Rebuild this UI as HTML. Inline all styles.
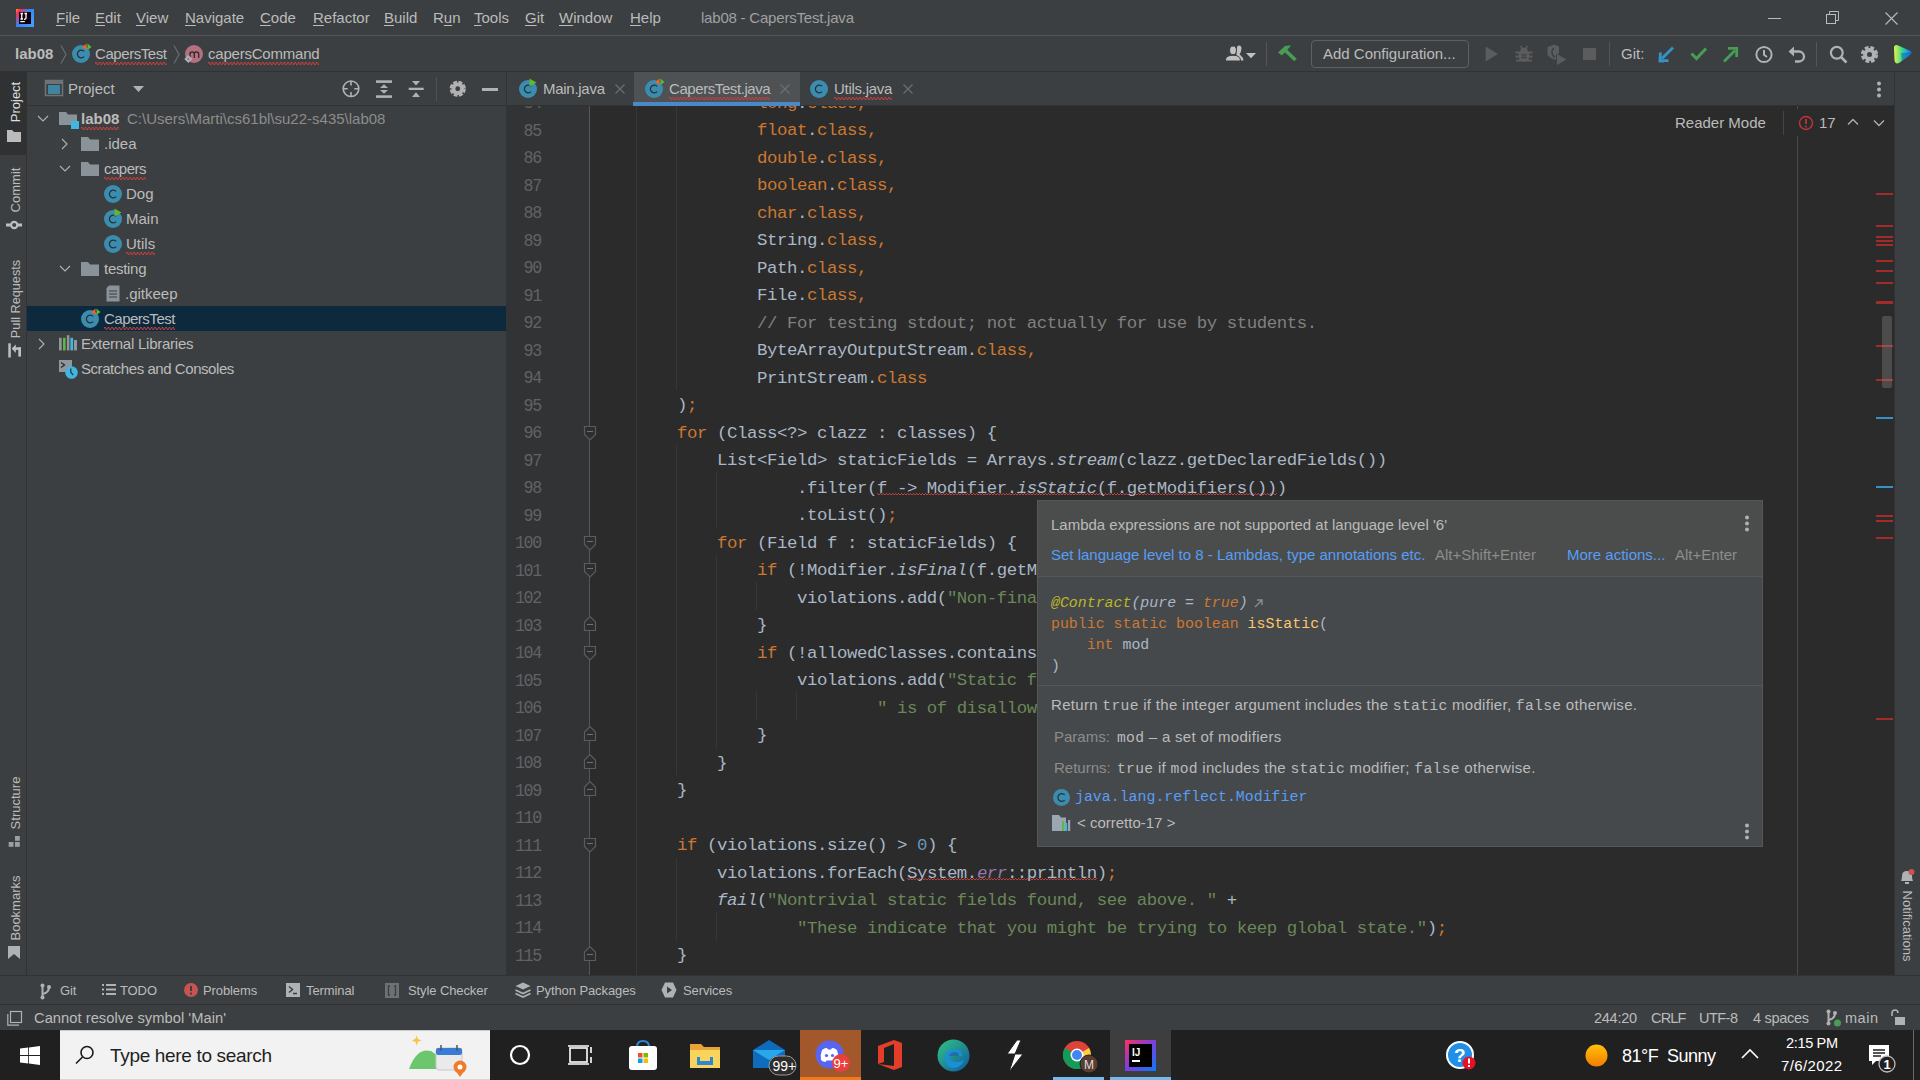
<!DOCTYPE html><html><head><meta charset="utf-8"><style>
*{margin:0;padding:0;box-sizing:border-box}
html,body{width:1920px;height:1080px;overflow:hidden;background:#3c3f41;font-family:"Liberation Sans",sans-serif;color:#bbbbbb}
.a{position:absolute}
.t{position:absolute;white-space:pre;font-size:15px;line-height:20px}
svg{position:absolute;overflow:visible}
#title{left:0;top:0;width:1920px;height:36px;background:#3c3f41;border-bottom:1px solid #515355}
#nav{left:0;top:36px;width:1920px;height:36px;background:#3c3f41;border-bottom:1px solid #323232}
#lstripe{left:0;top:72px;width:27px;height:903px;background:#3c3f41;border-right:1px solid #323232}
#rstripe{left:1894px;top:72px;width:26px;height:903px;background:#3c3f41;border-left:1px solid #323232}
#proj{left:27px;top:72px;width:479px;height:903px;background:#3c3f41}
#projhdr{left:27px;top:72px;width:479px;height:34px;border-bottom:1px solid #323232}
#tabs{left:506px;top:72px;width:1388px;height:34px;background:#3c3f41;border-bottom:1px solid #323232;border-left:1px solid #323232}
#gutter{left:506px;top:106px;width:84px;height:869px;background:#313335}
#editor{left:590px;top:106px;width:1304px;height:869px;background:#2b2b2b;overflow:hidden}
#btool{left:0;top:975px;width:1920px;height:30px;background:#3c3f41;border-top:1px solid #323232;border-bottom:1px solid #323232}
#status{left:0;top:1005px;width:1920px;height:25px;background:#3c3f41}
#taskbar{left:0;top:1030px;width:1920px;height:50px;background:#202020}
.code{position:absolute;left:7px;font-family:"Liberation Mono",monospace;font-size:17.4px;letter-spacing:-0.44px;line-height:27.5px;white-space:pre;color:#a9b7c6}
.k{color:#cc7832}.s{color:#6a8759}.n{color:#6897bb}.cm{color:#808080}.it{font-style:italic}.sf{color:#9876aa;font-style:italic}.an{color:#bbb529}
.ln{position:absolute;right:0;width:36px;text-align:right;font-family:"Liberation Mono",monospace;font-size:16.67px;letter-spacing:-1.35px;transform:scaleY(1.1);transform-origin:0 18px;line-height:27.5px;color:#606366}
.sq{background-image:linear-gradient(90deg,#b8403d 45%,transparent 45%),linear-gradient(90deg,transparent 50%,#b8403d 50%,#b8403d 95%,transparent 95%);background-size:3px 1px,3px 1px;background-repeat:repeat-x;background-position:0 calc(100% - 4px),0 calc(100% - 2.3px);}
.sq2{background-image:linear-gradient(90deg,#c0403c 45%,transparent 45%),linear-gradient(90deg,rgba(192,64,60,.55) 0 100%),linear-gradient(90deg,transparent 50%,#c0403c 50%,#c0403c 95%,transparent 95%);background-size:3.6px 1px,3.6px 1px,3.6px 1px;background-repeat:repeat-x;background-position:0 calc(100% - 2px),0 calc(100% - 1px),0 100%;padding-bottom:3px}
.ug{position:absolute;width:1px;background:#373737}
</style></head><body>
<div class="a" id="title"></div>
<svg style="left:16px;top:9px;" width="18" height="18" viewBox="0 0 18 18"><defs><linearGradient id="ijg" x1="0" y1="0" x2="0.9" y2="0.7"><stop offset="0" stop-color="#ff9a1f"/><stop offset="0.18" stop-color="#fe2857"/><stop offset="0.55" stop-color="#2f86f6"/><stop offset="1" stop-color="#3c9cff"/></linearGradient></defs><rect x="0" y="0" width="18" height="18" fill="url(#ijg)"/><rect x="3" y="3" width="12" height="12" fill="#12010a"/><path d="M4.5 4.5 H7 M5.75 4.5 V10 M4.5 10 H7 M8.5 4.5 H11 M10 4.5 V9 Q10 10.5 8 10.2" stroke="#fff" stroke-width="1.3" fill="none"/><rect x="4.3" y="12" width="4.5" height="1.2" fill="#fff"/></svg>
<div class="t" id="t56_18" style="left:56px;top:8px;font-size:15px;color:#bbbbbb;text-decoration-thickness:1px;text-underline-offset:2px;"><u>F</u>ile</div>
<div class="t" id="t95_18" style="left:95px;top:8px;font-size:15px;color:#bbbbbb;text-decoration-thickness:1px;text-underline-offset:2px;"><u>E</u>dit</div>
<div class="t" id="t136_18" style="left:136px;top:8px;font-size:15px;color:#bbbbbb;text-decoration-thickness:1px;text-underline-offset:2px;"><u>V</u>iew</div>
<div class="t" id="t185_18" style="left:185px;top:8px;font-size:15px;color:#bbbbbb;text-decoration-thickness:1px;text-underline-offset:2px;"><u>N</u>avigate</div>
<div class="t" id="t260_18" style="left:260px;top:8px;font-size:15px;color:#bbbbbb;text-decoration-thickness:1px;text-underline-offset:2px;"><u>C</u>ode</div>
<div class="t" id="t313_18" style="left:313px;top:8px;font-size:15px;color:#bbbbbb;text-decoration-thickness:1px;text-underline-offset:2px;"><u>R</u>efactor</div>
<div class="t" id="t384_18" style="left:384px;top:8px;font-size:15px;color:#bbbbbb;text-decoration-thickness:1px;text-underline-offset:2px;"><u>B</u>uild</div>
<div class="t" id="t433_18" style="left:433px;top:8px;font-size:15px;color:#bbbbbb;text-decoration-thickness:1px;text-underline-offset:2px;">R<u>u</u>n</div>
<div class="t" id="t474_18" style="left:474px;top:8px;font-size:15px;color:#bbbbbb;text-decoration-thickness:1px;text-underline-offset:2px;"><u>T</u>ools</div>
<div class="t" id="t525_18" style="left:525px;top:8px;font-size:15px;color:#bbbbbb;text-decoration-thickness:1px;text-underline-offset:2px;"><u>G</u>it</div>
<div class="t" id="t559_18" style="left:559px;top:8px;font-size:15px;color:#bbbbbb;text-decoration-thickness:1px;text-underline-offset:2px;"><u>W</u>indow</div>
<div class="t" id="t630_18" style="left:630px;top:8px;font-size:15px;color:#bbbbbb;text-decoration-thickness:1px;text-underline-offset:2px;"><u>H</u>elp</div>
<div class="t" id="t701_18" style="left:701px;top:8px;font-size:15px;color:#a0a0a0;letter-spacing:-0.209px;">lab08 - CapersTest.java</div>
<div class="a" style="left:1768px;top:18px;width:13px;height:1px;background:#bbbbbb"></div>
<svg style="left:1826px;top:11px;" width="14" height="14" viewBox="0 0 14 14"><rect x="0.5" y="3.5" width="9" height="9" fill="none" stroke="#bbb"/><path d="M3.5 3.5 V0.5 H12.5 V9.5 H9.5" fill="none" stroke="#bbb"/></svg>
<svg style="left:1885px;top:12px;" width="13" height="13" viewBox="0 0 13 13"><path d="M0.5 0.5 L12.5 12.5 M12.5 0.5 L0.5 12.5" stroke="#bbb" stroke-width="1.1"/></svg>
<div class="a" id="nav"></div>
<div class="t" id="t15_54" style="left:15px;top:44px;font-size:15px;color:#bbbbbb;font-weight:bold;">lab08</div>
<svg style="left:60px;top:45px;" width="8" height="20" viewBox="0 0 8 20"><path d="M1 0.5 L6 9.5 L1 18.5" stroke="#6a6d6f" stroke-width="1.2" fill="none"/></svg>
<svg style="left:72px;top:45px;" width="18" height="18" viewBox="0 0 18 18"><circle cx="9" cy="9" r="9" fill="#3b8db0"/><path d="M12.2 6.4 A3.9 3.9 0 1 0 12.2 11.6" stroke="#2b3033" stroke-width="1.25" fill="none"/><path d="M14.5 -1.5 V5 L10.5 2Z" fill="#f26522"/><path d="M15.5 -1.5 V5 L19.5 2Z" fill="#5fb832"/></svg>
<div class="t" id="t95_54" style="left:95px;top:44px;font-size:15px;color:#bbbbbb;letter-spacing:-0.431px;"><span class="sq2">CapersTest</span></div>
<svg style="left:173px;top:45px;" width="8" height="20" viewBox="0 0 8 20"><path d="M1 0.5 L6 9.5 L1 18.5" stroke="#6a6d6f" stroke-width="1.2" fill="none"/></svg>
<svg style="left:184px;top:44px;" width="20" height="20" viewBox="0 0 20 20"><circle cx="10" cy="10" r="9" fill="#b5707f"/><path d="M6 14 V8.5 M6 10 Q6 7.8 8.2 7.8 Q10.3 7.8 10.3 10 V14 M10.3 10 Q10.3 7.8 12.5 7.8 Q14.7 7.8 14.7 10 V14" stroke="#2b2b2b" stroke-width="1.3" fill="none"/><path d="M4.3 11 L8.3 15 L4.3 19 L0.3 15Z" fill="#a9b5bd"/><circle cx="4.3" cy="15" r="1.3" fill="#b5707f"/></svg>
<div class="t" id="t208_54" style="left:208px;top:44px;font-size:15px;color:#bbbbbb;letter-spacing:-0.218px;"><span class="sq2">capersCommand</span></div>
<svg style="left:1220px;top:42px;" width="30" height="22" viewBox="0 0 30 22"><path d="M17 5.5 Q17 3.5 19.3 3.5 Q21.5 3.5 21.5 6 Q21.5 10 19.5 12 Q21 14 23 16 L23.5 18.5 H16Z" fill="#c0c0c0"/><ellipse cx="13" cy="8.3" rx="3.4" ry="4.3" fill="#c0c0c0" stroke="#3c3f41" stroke-width="1"/><path d="M5.3 19 Q5.3 14.5 10 13.5 Q13 13 16 13.5 Q20.5 14.5 20.5 19Z" fill="#c0c0c0" stroke="#3c3f41" stroke-width="1"/></svg>
<svg style="left:1246px;top:53px;" width="10" height="6" viewBox="0 0 10 6"><path d="M0 0 L10 0 L5 5.3Z" fill="#c0c0c0"/></svg>
<div class="a" style="left:1266px;top:42px;width:1px;height:24px;background:#515658"></div>
<svg style="left:1276px;top:43px;" width="22" height="22" viewBox="0 0 22 22"><path d="M2 9.5 L9 3 L15 2.3 L13 5 L6 12.5Z" fill="#499c54"/><path d="M9.5 7.5 L19.5 17" stroke="#499c54" stroke-width="3.6"/></svg>
<div class="a" style="left:1311px;top:40px;width:158px;height:28px;border:1px solid #5e6060;border-radius:4px"></div>
<div class="t" id="t1323_54" style="left:1323px;top:44px;font-size:15px;color:#bbbbbb;">Add Configuration...</div>
<svg style="left:1484px;top:46px;" width="16" height="16" viewBox="0 0 16 16"><path d="M1.6 0.4 L14 7.9 L1.6 15.4Z" fill="#5a5c5e"/></svg>
<svg style="left:1514px;top:44px;" width="20" height="20" viewBox="0 0 20 20"><ellipse cx="10" cy="11.5" rx="5.6" ry="6.3" fill="#5a5c5e"/><rect x="6.5" y="3.8" width="7" height="4" rx="2" fill="#5a5c5e"/><path d="M6.5 2 L8 4 M13.5 2 L12 4" stroke="#5a5c5e" stroke-width="1.6"/><path d="M1.5 8.5 H18.5 M1.5 12.5 H18.5 M2 16.5 H18" stroke="#5a5c5e" stroke-width="2"/><path d="M7.5 10.8 H12.5 M7.5 13.5 H12.5" stroke="#3c3f41" stroke-width="1.3"/></svg>
<svg style="left:1546px;top:44px;" width="22" height="22" viewBox="0 0 22 22"><path d="M1.5 3 L8.5 0.5 L13 2.5 V9 L10 11 V16 Q5 15 1.5 11Z" fill="#5a5c5e"/><path d="M8 4 Q6 5 6 8 Q6 12 9 13" stroke="#3c3f41" stroke-width="1.4" fill="none"/><path d="M11 10 L20.5 15.5 L11 21Z" fill="#5a5c5e"/></svg>
<div class="a" style="left:1583px;top:48px;width:12.5px;height:12px;background:#5a5c5e"></div>
<div class="a" style="left:1609px;top:42px;width:1px;height:24px;background:#515658"></div>
<div class="t" id="t1621_54" style="left:1621px;top:44px;font-size:15px;color:#bbbbbb;">Git:</div>
<svg style="left:1658px;top:46px;" width="17" height="17" viewBox="0 0 17 17"><path d="M15 1.5 L4 12.5" stroke="#3592c4" stroke-width="2.8"/><path d="M2 11 V15 H6 M2.3 6.5 V14.7 H10.5" stroke="#3592c4" stroke-width="2.8" fill="none"/></svg>
<svg style="left:1690px;top:45px;" width="18" height="17" viewBox="0 0 18 17"><path d="M1.5 8.5 L6.5 13.5 L16 3.5" stroke="#499c54" stroke-width="3" fill="none"/></svg>
<svg style="left:1722px;top:46px;" width="17" height="17" viewBox="0 0 17 17"><path d="M2 15.5 L13 4.5" stroke="#499c54" stroke-width="2.8"/><path d="M6 2.3 H14.7 V11" stroke="#499c54" stroke-width="2.8" fill="none"/></svg>
<svg style="left:1755px;top:45px;" width="18" height="18" viewBox="0 0 18 18"><circle cx="9" cy="9.5" r="7.6" stroke="#afb1b3" stroke-width="2" fill="none"/><path d="M9 5 V9.8 L12 12" stroke="#afb1b3" stroke-width="2" fill="none"/></svg>
<svg style="left:1788px;top:45px;" width="18" height="18" viewBox="0 0 18 18"><path d="M5 6.5 H11 A5 5 0 0 1 11 16.5 H7" stroke="#afb1b3" stroke-width="2.3" fill="none"/><path d="M0.5 6.5 L6 1.5 V11.5Z" fill="#afb1b3"/></svg>
<div class="a" style="left:1816px;top:42px;width:1px;height:24px;background:#515658"></div>
<svg style="left:1829px;top:45px;" width="19" height="19" viewBox="0 0 19 19"><circle cx="7.8" cy="7.8" r="5.9" stroke="#afb1b3" stroke-width="2.2" fill="none"/><path d="M12 12 L17.5 17.5" stroke="#afb1b3" stroke-width="2.6"/></svg>
<svg style="left:1860px;top:45px;" width="19" height="19" viewBox="0 0 19 19"><circle cx="9.5" cy="9.5" r="6.3" fill="none" stroke="#afb1b3" stroke-width="4.6" stroke-dasharray="3.3 1.65"/><circle cx="9.5" cy="9.5" r="6.4" fill="#afb1b3"/><circle cx="9.5" cy="9.5" r="2.5" fill="#3c3f41"/></svg>
<svg style="left:1893px;top:44px;" width="20" height="20" viewBox="0 0 20 20"><defs><linearGradient id="cw" x1="0" y1="0.5" x2="1" y2="0.5"><stop offset="0" stop-color="#e8f24a"/><stop offset="0.45" stop-color="#3ddc84"/><stop offset="0.75" stop-color="#1ea1e6"/><stop offset="1" stop-color="#1466d2"/></linearGradient></defs><path d="M1 4 Q1 0.5 4.5 1.2 L17.5 7 Q19.8 8.5 17.5 10.5 L6 19 Q2 20.5 1.5 16Z" fill="url(#cw)"/><path d="M8 9 L18.5 8.5 L9 17Z" fill="#0d5fc2" opacity="0.55"/></svg>
<div class="a" id="lstripe"></div>
<div class="a" style="left:0;top:72px;width:26px;height:83px;background:#2f3133"></div>
<div class="t" style="left:-34px;top:93px;width:100px;line-height:18px;font-size:13px;color:#dddddd;text-align:center;transform:rotate(-90deg)">Project</div>
<svg style="left:7px;top:130px;" width="14" height="12" viewBox="0 0 14 12"><path d="M0 0 H5 L7 2 H14 V12 H0Z" fill="#bbbbbb"/></svg>
<div class="t" style="left:-34px;top:181px;width:100px;line-height:18px;font-size:13px;color:#bbbbbb;text-align:center;transform:rotate(-90deg)">Commit</div>
<svg style="left:0px;top:215px;" width="28" height="20" viewBox="0 0 28 20"><circle cx="14.2" cy="10" r="3.1" stroke="#bdbfc1" stroke-width="2.2" fill="none"/><path d="M6 10 H10.5 M18 10 H22" stroke="#bdbfc1" stroke-width="3"/></svg>
<div class="t" style="left:-34px;top:290px;width:100px;line-height:18px;font-size:12.7px;color:#bbbbbb;text-align:center;transform:rotate(-90deg)">Pull Requests</div>
<svg style="left:0px;top:335px;" width="28" height="30" viewBox="0 0 28 30"><rect x="8.3" y="8.3" width="2.5" height="14.2" fill="#bdbfc1"/><path d="M11.7 13.6 L15.8 9.4 V18 Z" fill="#bdbfc1"/><rect x="15" y="12.3" width="6" height="2.6" fill="#bdbfc1"/><rect x="18.3" y="12.3" width="2.7" height="9.3" fill="#bdbfc1"/></svg>
<div class="t" style="left:-34px;top:794px;width:100px;line-height:18px;font-size:13px;color:#bbbbbb;text-align:center;transform:rotate(-90deg)">Structure</div>
<svg style="left:8px;top:836px;" width="13" height="12" viewBox="0 0 13 12"><rect x="0.7" y="6" width="4.8" height="4.8" fill="#9c9ea0"/><rect x="7" y="6" width="4.8" height="4.8" fill="#9c9ea0"/><rect x="7" y="0" width="4.8" height="4.8" fill="#9c9ea0"/></svg>
<div class="t" style="left:-34px;top:899px;width:100px;line-height:18px;font-size:13px;color:#bbbbbb;text-align:center;transform:rotate(-90deg)">Bookmarks</div>
<svg style="left:8px;top:946px;" width="12" height="13" viewBox="0 0 12 13"><path d="M0 0 H12 V13 L6 8 L0 13Z" fill="#afb1b3"/></svg>
<div class="a" id="proj"></div>
<div class="a" id="projhdr"></div>
<svg style="left:45px;top:80px;" width="18" height="17" viewBox="0 0 18 17"><rect x="0.5" y="0.5" width="17" height="15" fill="none" stroke="#6f7375" stroke-width="1.5"/><rect x="1" y="1" width="16" height="3" fill="#6f7375"/><rect x="3" y="5" width="12" height="9" fill="#3e86a0"/></svg>
<div class="t" id="t68_89" style="left:68px;top:79px;font-size:15px;color:#bbbbbb;">Project</div>
<svg style="left:133px;top:86px;" width="12" height="7" viewBox="0 0 12 7"><path d="M0 0 H11 L5.5 6Z" fill="#afb1b3"/></svg>
<svg style="left:341px;top:79px;" width="20" height="20" viewBox="0 0 20 20"><circle cx="10" cy="9.75" r="7.8" stroke="#afb1b3" stroke-width="1.6" fill="none"/><path d="M10 2 V6.5 M10 13 V17.5 M2.2 9.75 H6.7 M13.3 9.75 H17.8" stroke="#afb1b3" stroke-width="1.6"/></svg>
<svg style="left:374px;top:79px;" width="20" height="20" viewBox="0 0 20 20"><rect x="2" y="1.3" width="16" height="2.6" fill="#afb1b3"/><rect x="2" y="16.3" width="16" height="2.6" fill="#afb1b3"/><path d="M6 9 L10 5.2 L14 9Z M6 11 L10 14.8 L14 11Z" fill="#afb1b3"/></svg>
<svg style="left:407px;top:79px;" width="20" height="20" viewBox="0 0 20 20"><rect x="1.7" y="8.7" width="15" height="2.3" fill="#afb1b3"/><path d="M5 2 L13 2 L9 6.6Z M5 18 L13 18 L9 13.2Z" fill="#afb1b3"/></svg>
<div class="a" style="left:436px;top:77px;width:1px;height:24px;background:#4f5254"></div>
<svg style="left:448px;top:79px;" width="20" height="20" viewBox="0 0 20 20"><circle cx="9.75" cy="9.75" r="6" fill="none" stroke="#afb1b3" stroke-width="4.2" stroke-dasharray="3.4 1.3"/><circle cx="9.75" cy="9.75" r="6.2" fill="#afb1b3"/><circle cx="9.75" cy="9.75" r="2.4" fill="#3c3f41"/></svg>
<div class="a" style="left:482px;top:88px;width:16px;height:2.5px;background:#afb1b3"></div>
<svg style="left:37px;top:115px;" width="12" height="8" viewBox="0 0 12 8"><path d="M1 1 L6 6 L11 1" stroke="#afb1b3" stroke-width="1.1" fill="none"/></svg>
<svg style="left:59px;top:112px;" width="18" height="13" viewBox="0 0 18 13"><path d="M0 0 H7 L9 2.5 H18 V13 H0Z" fill="#8a9399"/></svg>
<div class="a" style="left:71px;top:121px;width:8px;height:8px;background:#40b6e0"></div>
<div class="t" id="t81_119" style="left:81px;top:109px;font-size:15px;color:#bbbbbb;font-weight:bold;"><span class="sq2">lab08</span></div>
<div class="t" id="t127_119" style="left:127px;top:109px;font-size:15px;color:#8c8c8c;">C:\Users\Marti\cs61bl\su22-s435\lab08</div>
<svg style="left:61px;top:138px;" width="8" height="12" viewBox="0 0 8 12"><path d="M1 1 L6 6 L1 11" stroke="#afb1b3" stroke-width="1.1" fill="none"/></svg>
<svg style="left:81px;top:137px;" width="18" height="14" viewBox="0 0 18 14"><path d="M0 0 H7 L9 2.5 H18 V14 H0Z" fill="#8a9399"/></svg>
<div class="t" id="t104_144" style="left:104px;top:134px;font-size:15px;">.idea</div>
<svg style="left:59px;top:165px;" width="12" height="8" viewBox="0 0 12 8"><path d="M1 1 L6 6 L11 1" stroke="#afb1b3" stroke-width="1.1" fill="none"/></svg>
<svg style="left:81px;top:162px;" width="18" height="14" viewBox="0 0 18 14"><path d="M0 0 H7 L9 2.5 H18 V14 H0Z" fill="#8a9399"/></svg>
<div class="t" id="t104_169" style="left:104px;top:159px;font-size:15px;letter-spacing:-0.506px;"><span class="sq2">capers</span></div>
<svg style="left:104px;top:185px;" width="18" height="18" viewBox="0 0 18 18"><circle cx="9" cy="9" r="9" fill="#3b8db0"/><path d="M12.2 6.4 A3.9 3.9 0 1 0 12.2 11.6" stroke="#2b3033" stroke-width="1.25" fill="none"/></svg>
<div class="t" id="t126_194" style="left:126px;top:184px;font-size:15px;">Dog</div>
<svg style="left:104px;top:210px;" width="18" height="18" viewBox="0 0 18 18"><circle cx="9" cy="9" r="9" fill="#3b8db0"/><path d="M12.2 6.4 A3.9 3.9 0 1 0 12.2 11.6" stroke="#2b3033" stroke-width="1.25" fill="none"/><path d="M10.5 -1.5 L17.5 2.5 L10.5 6.5 Z" fill="#5fb832"/></svg>
<div class="t" id="t126_219" style="left:126px;top:209px;font-size:15px;">Main</div>
<svg style="left:104px;top:235px;" width="18" height="18" viewBox="0 0 18 18"><circle cx="9" cy="9" r="9" fill="#3b8db0"/><path d="M12.2 6.4 A3.9 3.9 0 1 0 12.2 11.6" stroke="#2b3033" stroke-width="1.25" fill="none"/></svg>
<div class="t" id="t126_244" style="left:126px;top:234px;font-size:15px;"><span class="sq2">Utils</span></div>
<svg style="left:59px;top:265px;" width="12" height="8" viewBox="0 0 12 8"><path d="M1 1 L6 6 L11 1" stroke="#afb1b3" stroke-width="1.1" fill="none"/></svg>
<svg style="left:81px;top:262px;" width="18" height="14" viewBox="0 0 18 14"><path d="M0 0 H7 L9 2.5 H18 V14 H0Z" fill="#8a9399"/></svg>
<div class="t" id="t104_269" style="left:104px;top:259px;font-size:15px;letter-spacing:-0.284px;">testing</div>
<svg style="left:106px;top:285px;" width="14" height="17" viewBox="0 0 14 17"><path d="M3 0.5 H13.5 V16.5 H0.5 V3Z" fill="#8a9399"/><path d="M3 6 H11 M3 9 H11 M3 12 H11" stroke="#3c3f41" stroke-width="1.2"/></svg>
<div class="t" id="t125_294" style="left:125px;top:284px;font-size:15px;">.gitkeep</div>
<div class="a" style="left:27px;top:306px;width:479px;height:25px;background:#0d293e"></div>
<svg style="left:81px;top:310px;" width="18" height="18" viewBox="0 0 18 18"><circle cx="9" cy="9" r="9" fill="#3b8db0"/><path d="M12.2 6.4 A3.9 3.9 0 1 0 12.2 11.6" stroke="#2b3033" stroke-width="1.25" fill="none"/><path d="M14.5 -1.5 V5 L10.5 2Z" fill="#f26522"/><path d="M15.5 -1.5 V5 L19.5 2Z" fill="#5fb832"/></svg>
<div class="t" id="t104_319" style="left:104px;top:309px;font-size:15px;letter-spacing:-0.497px;"><span class="sq2">CapersTest</span></div>
<svg style="left:38px;top:338px;" width="8" height="12" viewBox="0 0 8 12"><path d="M1 1 L6 6 L1 11" stroke="#afb1b3" stroke-width="1.1" fill="none"/></svg>
<svg style="left:58px;top:334px;" width="20" height="18" viewBox="0 0 20 18"><rect x="1" y="3.8" width="2.7" height="12.6" fill="#8e979d"/><rect x="5" y="3.8" width="2.6" height="12.6" fill="#62b543"/><rect x="8.9" y="1.2" width="2.5" height="15.2" fill="#8e979d"/><rect x="12.4" y="3.8" width="2.7" height="12.6" fill="#40b6e0"/><rect x="16" y="6" width="3" height="10.4" fill="#8e979d"/></svg>
<div class="t" id="t81_344" style="left:81px;top:334px;font-size:15px;letter-spacing:-0.248px;">External Libraries</div>
<svg style="left:58px;top:359px;" width="24" height="22" viewBox="0 0 24 22"><path d="M1 1 H14 V8 Q10 9 9 13 H1Z" fill="#8e979d"/><path d="M3 3.5 L6.5 6 L3 8.5" stroke="#2b2d2f" stroke-width="1.3" fill="none"/><circle cx="13.5" cy="13.5" r="6.3" fill="#40b6e0"/><path d="M12.8 9.5 V13.3 L15.2 16" stroke="#2b3033" stroke-width="1.2" fill="none"/></svg>
<div class="t" id="t81_369" style="left:81px;top:359px;font-size:15px;letter-spacing:-0.443px;">Scratches and Consoles</div>
<div class="a" id="gutter"></div>
<div class="a" id="editor">
<div class="ug" style="left:46px;top:-1px;height:870px"></div>
<div class="ug" style="left:86px;top:-1px;height:285px"></div>
<div class="ug" style="left:86px;top:339px;height:330px"></div>
<div class="ug" style="left:86px;top:752px;height:82px"></div>
<div class="ug" style="left:126px;top:366px;height:55px"></div>
<div class="ug" style="left:126px;top:449px;height:193px"></div>
<div class="ug" style="left:126px;top:806px;height:28px"></div>
<div class="ug" style="left:166px;top:476px;height:28px"></div>
<div class="ug" style="left:166px;top:586px;height:28px"></div>
<div class="ug" style="left:206px;top:586px;height:28px"></div>
<div class="ug" style="left:1207px;top:0;height:3px;background:#4a4a4a"></div><div class="ug" style="left:1207px;top:30px;height:840px;background:#4a4a4a"></div>
<div class="code" style="top:-16.30px">                <span class="k">long</span>.<span class="k">class</span><span class="k">,</span></div><div class="code" style="top:11.20px">                <span class="k">float</span>.<span class="k">class</span><span class="k">,</span></div><div class="code" style="top:38.70px">                <span class="k">double</span>.<span class="k">class</span><span class="k">,</span></div><div class="code" style="top:66.20px">                <span class="k">boolean</span>.<span class="k">class</span><span class="k">,</span></div><div class="code" style="top:93.70px">                <span class="k">char</span>.<span class="k">class</span><span class="k">,</span></div><div class="code" style="top:121.20px">                String.<span class="k">class</span><span class="k">,</span></div><div class="code" style="top:148.70px">                Path.<span class="k">class</span><span class="k">,</span></div><div class="code" style="top:176.20px">                File.<span class="k">class</span><span class="k">,</span></div><div class="code" style="top:203.70px">                <span class="cm">// For testing stdout; not actually for use by students.</span></div><div class="code" style="top:231.20px">                ByteArrayOutputStream.<span class="k">class</span><span class="k">,</span></div><div class="code" style="top:258.70px">                PrintStream.<span class="k">class</span></div><div class="code" style="top:286.20px">        )<span class="k">;</span></div><div class="code" style="top:313.70px">        <span class="k">for</span> (Class&lt;?&gt; clazz : classes) {</div><div class="code" style="top:341.20px">            List&lt;Field&gt; staticFields = Arrays.<span class="it">stream</span>(clazz.getDeclaredFields())</div><div class="code" style="top:368.70px">                    .filter(<span class="sq">f -&gt; Modifier.<span class="it">isStatic</span>(f.getModifiers())</span>)</div><div class="code" style="top:396.20px">                    .toList()<span class="k">;</span></div><div class="code" style="top:423.70px">            <span class="k">for</span> (Field f : staticFields) {</div><div class="code" style="top:451.20px">                <span class="k">if</span> (!Modifier.<span class="it">isFinal</span>(f.getModifiers())) {</div><div class="code" style="top:478.70px">                    violations.add(<span class="s">&quot;Non-final static field &quot; </span>+</div><div class="code" style="top:506.20px">                }</div><div class="code" style="top:533.70px">                <span class="k">if</span> (!allowedClasses.contains(f.getType())) {</div><div class="code" style="top:561.20px">                    violations.add(<span class="s">&quot;Static field &quot;</span> + f.getName() +</div><div class="code" style="top:588.70px">                            <span class="s">&quot; is of disallowed type&quot;</span>)<span class="k">;</span></div><div class="code" style="top:616.20px">                }</div><div class="code" style="top:643.70px">            }</div><div class="code" style="top:671.20px">        }</div><div class="code" style="top:698.70px"></div><div class="code" style="top:726.20px">        <span class="k">if</span> (violations.size() &gt; <span class="n">0</span>) {</div><div class="code" style="top:753.70px">            violations.forEach(<span class="sq">System.<span class="sf">err</span>::println</span>)<span class="k">;</span></div><div class="code" style="top:781.20px">            <span class="it">fail</span>(<span class="s">&quot;Nontrivial static fields found, see above. &quot;</span> +</div><div class="code" style="top:808.70px">                    <span class="s">&quot;These indicate that you might be trying to keep global state.&quot;</span>)<span class="k">;</span></div><div class="code" style="top:836.20px">        }</div><div class="code" style="top:863.70px"></div>
</div>
<div class="a" style="left:506px;top:106px;width:84px;height:869px;overflow:hidden">
<div class="ln" style="left:0;width:34.9px;top:-15.90px">84</div>
<div class="ln" style="left:0;width:34.9px;top:11.60px">85</div>
<div class="ln" style="left:0;width:34.9px;top:39.10px">86</div>
<div class="ln" style="left:0;width:34.9px;top:66.60px">87</div>
<div class="ln" style="left:0;width:34.9px;top:94.10px">88</div>
<div class="ln" style="left:0;width:34.9px;top:121.60px">89</div>
<div class="ln" style="left:0;width:34.9px;top:149.10px">90</div>
<div class="ln" style="left:0;width:34.9px;top:176.60px">91</div>
<div class="ln" style="left:0;width:34.9px;top:204.10px">92</div>
<div class="ln" style="left:0;width:34.9px;top:231.60px">93</div>
<div class="ln" style="left:0;width:34.9px;top:259.10px">94</div>
<div class="ln" style="left:0;width:34.9px;top:286.60px">95</div>
<div class="ln" style="left:0;width:34.9px;top:314.10px">96</div>
<div class="ln" style="left:0;width:34.9px;top:341.60px">97</div>
<div class="ln" style="left:0;width:34.9px;top:369.10px">98</div>
<div class="ln" style="left:0;width:34.9px;top:396.60px">99</div>
<div class="ln" style="left:0;width:34.9px;top:424.10px">100</div>
<div class="ln" style="left:0;width:34.9px;top:451.60px">101</div>
<div class="ln" style="left:0;width:34.9px;top:479.10px">102</div>
<div class="ln" style="left:0;width:34.9px;top:506.60px">103</div>
<div class="ln" style="left:0;width:34.9px;top:534.10px">104</div>
<div class="ln" style="left:0;width:34.9px;top:561.60px">105</div>
<div class="ln" style="left:0;width:34.9px;top:589.10px">106</div>
<div class="ln" style="left:0;width:34.9px;top:616.60px">107</div>
<div class="ln" style="left:0;width:34.9px;top:644.10px">108</div>
<div class="ln" style="left:0;width:34.9px;top:671.60px">109</div>
<div class="ln" style="left:0;width:34.9px;top:699.10px">110</div>
<div class="ln" style="left:0;width:34.9px;top:726.60px">111</div>
<div class="ln" style="left:0;width:34.9px;top:754.10px">112</div>
<div class="ln" style="left:0;width:34.9px;top:781.60px">113</div>
<div class="ln" style="left:0;width:34.9px;top:809.10px">114</div>
<div class="ln" style="left:0;width:34.9px;top:836.60px">115</div>
<div class="ln" style="left:0;width:34.9px;top:864.10px">116</div>
</div>
<div class="a" id="tabs"></div>
<div class="a" style="left:634px;top:72px;width:166px;height:33px;background:#4e5254"></div>
<div class="a" style="left:633px;top:102px;width:167px;height:4px;background:#4a88c7"></div>
<svg style="left:519px;top:80px;" width="18" height="18" viewBox="0 0 18 18"><circle cx="9" cy="9" r="9" fill="#3b8db0"/><path d="M12.2 6.4 A3.9 3.9 0 1 0 12.2 11.6" stroke="#2b3033" stroke-width="1.25" fill="none"/><path d="M10.5 -1.5 L17.5 2.5 L10.5 6.5 Z" fill="#5fb832"/></svg>
<div class="t" id="t543_89" style="left:543px;top:79px;font-size:15px;letter-spacing:-0.275px;">Main.java</div>
<svg style="left:615px;top:84px;" width="10" height="10" viewBox="0 0 10 10"><path d="M0.5 0.5 L9.5 9.5 M9.5 0.5 L0.5 9.5" stroke="#6e7072" stroke-width="1.1"/></svg>
<svg style="left:645px;top:80px;" width="18" height="18" viewBox="0 0 18 18"><circle cx="9" cy="9" r="9" fill="#3b8db0"/><path d="M12.2 6.4 A3.9 3.9 0 1 0 12.2 11.6" stroke="#2b3033" stroke-width="1.25" fill="none"/><path d="M14.5 -1.5 V5 L10.5 2Z" fill="#f26522"/><path d="M15.5 -1.5 V5 L19.5 2Z" fill="#5fb832"/></svg>
<div class="t" id="t669_89" style="left:669px;top:79px;font-size:15px;letter-spacing:-0.419px;"><span class="sq2">CapersTest.java</span></div>
<svg style="left:780px;top:84px;" width="10" height="10" viewBox="0 0 10 10"><path d="M0.5 0.5 L9.5 9.5 M9.5 0.5 L0.5 9.5" stroke="#6e7072" stroke-width="1.1"/></svg>
<svg style="left:810px;top:80px;" width="18" height="18" viewBox="0 0 18 18"><circle cx="9" cy="9" r="9" fill="#3b8db0"/><path d="M12.2 6.4 A3.9 3.9 0 1 0 12.2 11.6" stroke="#2b3033" stroke-width="1.25" fill="none"/></svg>
<div class="t" id="t834_89" style="left:834px;top:79px;font-size:15px;letter-spacing:-0.284px;"><span class="sq2">Utils.java</span></div>
<svg style="left:903px;top:84px;" width="10" height="10" viewBox="0 0 10 10"><path d="M0.5 0.5 L9.5 9.5 M9.5 0.5 L0.5 9.5" stroke="#6e7072" stroke-width="1.1"/></svg>
<svg style="left:1876px;top:81px;" width="6" height="17" viewBox="0 0 6 17"><circle cx="3" cy="2.5" r="2" fill="#afb1b3"/><circle cx="3" cy="8.5" r="2" fill="#afb1b3"/><circle cx="3" cy="14.5" r="2" fill="#afb1b3"/></svg>
<div class="a" style="left:589px;top:106px;width:1px;height:869px;background:#555759"></div>
<svg style="left:584px;top:425.5px;" width="13" height="15" viewBox="0 0 13 15"><path d="M0.5 0.5 H11.5 V8.5 L6 14 L0.5 8.5Z" fill="#2d2e2f" stroke="#5a5c5e" stroke-width="1.2"/><path d="M3 5.5 H9" stroke="#6e7072" stroke-width="1"/></svg>
<svg style="left:584px;top:535.5px;" width="13" height="15" viewBox="0 0 13 15"><path d="M0.5 0.5 H11.5 V8.5 L6 14 L0.5 8.5Z" fill="#2d2e2f" stroke="#5a5c5e" stroke-width="1.2"/><path d="M3 5.5 H9" stroke="#6e7072" stroke-width="1"/></svg>
<svg style="left:584px;top:563.0px;" width="13" height="15" viewBox="0 0 13 15"><path d="M0.5 0.5 H11.5 V8.5 L6 14 L0.5 8.5Z" fill="#2d2e2f" stroke="#5a5c5e" stroke-width="1.2"/><path d="M3 5.5 H9" stroke="#6e7072" stroke-width="1"/></svg>
<svg style="left:584px;top:645.5px;" width="13" height="15" viewBox="0 0 13 15"><path d="M0.5 0.5 H11.5 V8.5 L6 14 L0.5 8.5Z" fill="#2d2e2f" stroke="#5a5c5e" stroke-width="1.2"/><path d="M3 5.5 H9" stroke="#6e7072" stroke-width="1"/></svg>
<svg style="left:584px;top:838.0px;" width="13" height="15" viewBox="0 0 13 15"><path d="M0.5 0.5 H11.5 V8.5 L6 14 L0.5 8.5Z" fill="#2d2e2f" stroke="#5a5c5e" stroke-width="1.2"/><path d="M3 5.5 H9" stroke="#6e7072" stroke-width="1"/></svg>
<svg style="left:584px;top:616.0px;" width="13" height="15" viewBox="0 0 13 15"><path d="M0.5 14.5 H11.5 V6 L6 0.5 L0.5 6Z" fill="#2d2e2f" stroke="#5a5c5e" stroke-width="1.2"/><path d="M3 8.5 H9" stroke="#6e7072" stroke-width="1"/></svg>
<svg style="left:584px;top:726.0px;" width="13" height="15" viewBox="0 0 13 15"><path d="M0.5 14.5 H11.5 V6 L6 0.5 L0.5 6Z" fill="#2d2e2f" stroke="#5a5c5e" stroke-width="1.2"/><path d="M3 8.5 H9" stroke="#6e7072" stroke-width="1"/></svg>
<svg style="left:584px;top:753.5px;" width="13" height="15" viewBox="0 0 13 15"><path d="M0.5 14.5 H11.5 V6 L6 0.5 L0.5 6Z" fill="#2d2e2f" stroke="#5a5c5e" stroke-width="1.2"/><path d="M3 8.5 H9" stroke="#6e7072" stroke-width="1"/></svg>
<svg style="left:584px;top:781.0px;" width="13" height="15" viewBox="0 0 13 15"><path d="M0.5 14.5 H11.5 V6 L6 0.5 L0.5 6Z" fill="#2d2e2f" stroke="#5a5c5e" stroke-width="1.2"/><path d="M3 8.5 H9" stroke="#6e7072" stroke-width="1"/></svg>
<svg style="left:584px;top:946.0px;" width="13" height="15" viewBox="0 0 13 15"><path d="M0.5 14.5 H11.5 V6 L6 0.5 L0.5 6Z" fill="#2d2e2f" stroke="#5a5c5e" stroke-width="1.2"/><path d="M3 8.5 H9" stroke="#6e7072" stroke-width="1"/></svg>
<div class="t" id="t1675_123" style="left:1675px;top:113px;font-size:15px;color:#bbbbbb;">Reader Mode</div>
<div class="a" style="left:1783px;top:111px;width:1px;height:24px;background:#424446"></div>
<svg style="left:1798px;top:115px;" width="16" height="16" viewBox="0 0 16 16"><circle cx="8" cy="8" r="6.5" stroke="#c03538" stroke-width="1.4" fill="none"/><path d="M8 4 V9" stroke="#c03538" stroke-width="1.8"/><circle cx="8" cy="11.5" r="1" fill="#c03538"/></svg>
<div class="t" id="t1819_123" style="left:1819px;top:113px;font-size:15px;color:#bbbbbb;">17</div>
<svg style="left:1847px;top:118px;" width="12" height="8" viewBox="0 0 12 8"><path d="M1 6.5 L6 1.5 L11 6.5" stroke="#afb1b3" stroke-width="1.3" fill="none"/></svg>
<svg style="left:1873px;top:119px;" width="12" height="8" viewBox="0 0 12 8"><path d="M1 1.5 L6 6.5 L11 1.5" stroke="#afb1b3" stroke-width="1.3" fill="none"/></svg>
<div class="a" style="left:1876px;top:193px;width:17px;height:2px;background:#a32b2b"></div>
<div class="a" style="left:1876px;top:225px;width:17px;height:2px;background:#a32b2b"></div>
<div class="a" style="left:1876px;top:236px;width:17px;height:2px;background:#a32b2b"></div>
<div class="a" style="left:1876px;top:240px;width:17px;height:2px;background:#a32b2b"></div>
<div class="a" style="left:1876px;top:244px;width:17px;height:2px;background:#a32b2b"></div>
<div class="a" style="left:1876px;top:260px;width:17px;height:2px;background:#a32b2b"></div>
<div class="a" style="left:1876px;top:270px;width:17px;height:2px;background:#a32b2b"></div>
<div class="a" style="left:1876px;top:281.5px;width:17px;height:2px;background:#a32b2b"></div>
<div class="a" style="left:1876px;top:301px;width:17px;height:2px;background:#a32b2b"></div>
<div class="a" style="left:1876px;top:302px;width:17px;height:2px;background:#a32b2b"></div>
<div class="a" style="left:1876px;top:345px;width:17px;height:2px;background:#a32b2b"></div>
<div class="a" style="left:1876px;top:379px;width:17px;height:2px;background:#a32b2b"></div>
<div class="a" style="left:1876px;top:515px;width:17px;height:2px;background:#a32b2b"></div>
<div class="a" style="left:1876px;top:520px;width:17px;height:2px;background:#a32b2b"></div>
<div class="a" style="left:1876px;top:537px;width:17px;height:2px;background:#a32b2b"></div>
<div class="a" style="left:1876px;top:718px;width:17px;height:2px;background:#a32b2b"></div>
<div class="a" style="left:1876px;top:417px;width:17px;height:2px;background:#3592c4"></div>
<div class="a" style="left:1876px;top:486px;width:17px;height:2px;background:#3592c4"></div>
<div class="a" style="left:1882px;top:316px;width:10px;height:72px;background:rgba(160,160,160,0.28);border-radius:2px"></div>
<div class="a" id="rstripe"></div>
<div class="a" style="left:1037px;top:500px;width:726px;height:347px;background:#46494b;border:1px solid #555759"></div>
<div class="a" style="left:1038px;top:501px;width:724px;height:76px;background:#4b4d4d;border-bottom:1px solid #55585a"></div>
<div class="t" id="t1051_525" style="left:1051px;top:515px;font-size:15px;color:#bbbbbb;">Lambda expressions are not supported at language level '6'</div>
<svg style="left:1744px;top:515px;" width="6" height="17" viewBox="0 0 6 17"><circle cx="3" cy="2.5" r="2" fill="#afb1b3"/><circle cx="3" cy="8.5" r="2" fill="#afb1b3"/><circle cx="3" cy="14.5" r="2" fill="#afb1b3"/></svg>
<div class="t" id="t1051_555" style="left:1051px;top:545px;font-size:15px;color:#589df6;">Set language level to 8 - Lambdas, type annotations etc.</div>
<div class="t" id="t1435_555" style="left:1435px;top:545px;font-size:15px;color:#8c8c8c;">Alt+Shift+Enter</div>
<div class="t" id="t1567_555" style="left:1567px;top:545px;font-size:15px;color:#589df6;">More actions...</div>
<div class="t" id="t1675_555" style="left:1675px;top:545px;font-size:15px;color:#8c8c8c;">Alt+Enter</div>
<div class="a" style="left:1038px;top:685px;width:724px;height:1px;background:#55585a"></div>
<div class="t" id="t1051_603" style="left:1051px;top:593px;font-size:14.9px;color:#a9b7c6;font-family:&quot;Liberation Mono&quot;,monospace;font-size:14.9px;"><span class="it" style="color:#bbb529">@Contract</span><span class="it" style="color:#a9b7c6">(pure = </span><span class="it" style="color:#cc7832">true</span><span class="it" style="color:#a9b7c6">)</span></div>
<svg style="left:1254px;top:598px;" width="10" height="10" viewBox="0 0 10 10"><path d="M1 9 L8 2 M3 2 H8 V7" stroke="#8c8c8c" stroke-width="1.4" fill="none"/></svg>
<div class="t" id="t1051_624" style="left:1051px;top:614px;font-size:14.9px;color:#a9b7c6;font-family:&quot;Liberation Mono&quot;,monospace;font-size:14.9px;"><span style="color:#cc7832">public static boolean </span><span style="color:#ffc66d">isStatic</span><span style="color:#a9b7c6">(</span></div>
<div class="t" id="t1051_645" style="left:1051px;top:635px;font-size:14.9px;color:#a9b7c6;font-family:&quot;Liberation Mono&quot;,monospace;font-size:14.9px;"><span style="color:#cc7832">    int </span><span style="color:#a9b7c6">mod</span></div>
<div class="t" id="t1051_666" style="left:1051px;top:656px;font-size:14.9px;color:#a9b7c6;font-family:&quot;Liberation Mono&quot;,monospace;font-size:14.9px;">)</div>
<div class="t" id="t1051_705" style="left:1051px;top:695px;font-size:15px;color:#bbbbbb;letter-spacing:0.3px;">Return <span style="font-family:&quot;Liberation Mono&quot;,monospace;font-size:14.7px;">true</span> if the integer argument includes the <span style="font-family:&quot;Liberation Mono&quot;,monospace;font-size:14.7px;">static</span> modifier, <span style="font-family:&quot;Liberation Mono&quot;,monospace;font-size:14.7px;">false</span> otherwise.</div>
<div class="t" id="t1054_737" style="left:1054px;top:727px;font-size:15px;color:#8c8c8c;">Params:</div>
<div class="t" id="t1117_737" style="left:1117px;top:727px;font-size:15px;color:#bbbbbb;letter-spacing:0.3px;"><span style="font-family:&quot;Liberation Mono&quot;,monospace;font-size:14.7px;">mod</span> &ndash; a set of modifiers</div>
<div class="t" id="t1054_768" style="left:1054px;top:758px;font-size:15px;color:#8c8c8c;">Returns:</div>
<div class="t" id="t1117_768" style="left:1117px;top:758px;font-size:15px;color:#bbbbbb;letter-spacing:0.3px;"><span style="font-family:&quot;Liberation Mono&quot;,monospace;font-size:14.7px;">true</span> if <span style="font-family:&quot;Liberation Mono&quot;,monospace;font-size:14.7px;">mod</span> includes the <span style="font-family:&quot;Liberation Mono&quot;,monospace;font-size:14.7px;">static</span> modifier; <span style="font-family:&quot;Liberation Mono&quot;,monospace;font-size:14.7px;">false</span> otherwise.</div>
<svg style="left:1053px;top:789px;" width="17.0" height="17.0" viewBox="0 0 17.0 17.0"><circle cx="8.5" cy="8.5" r="8.5" fill="#3b8db0"/><path d="M11.7 5.9 A3.9 3.9 0 1 0 11.7 11.1" stroke="#2b3033" stroke-width="1.25" fill="none"/></svg>
<div class="t" id="t1075_797" style="left:1075px;top:787px;font-size:14.9px;color:#589df6;font-family:&quot;Liberation Mono&quot;,monospace;font-size:14.9px;">java.lang.reflect.Modifier</div>
<svg style="left:1052px;top:815px;" width="20" height="17" viewBox="0 0 20 17"><path d="M0 0 H7 L9 2.5 H14 V16 H0Z" fill="#9aa7b0"/><rect x="10" y="6" width="2.2" height="10" fill="#62b543"/><rect x="13" y="8" width="2.2" height="8" fill="#40b6e0"/><rect x="16" y="5" width="2.2" height="11" fill="#9aa7b0"/></svg>
<div class="t" id="t1077_823" style="left:1077px;top:813px;font-size:15px;color:#bbbbbb;">&lt; corretto-17 &gt;</div>
<svg style="left:1744px;top:823px;" width="6" height="17" viewBox="0 0 6 17"><circle cx="3" cy="2.5" r="2" fill="#afb1b3"/><circle cx="3" cy="8.5" r="2" fill="#afb1b3"/><circle cx="3" cy="14.5" r="2" fill="#afb1b3"/></svg>
<div class="a" id="btool"></div>
<svg style="left:40px;top:983px;" width="12" height="17" viewBox="0 0 12 17"><circle cx="2.5" cy="2.5" r="2" fill="#afb1b3"/><circle cx="2.5" cy="14.5" r="2" fill="#afb1b3"/><path d="M2.5 2 V15 M2.5 11 Q9 10 9 4" stroke="#afb1b3" stroke-width="2" fill="none"/><circle cx="9" cy="4" r="2" fill="#afb1b3"/></svg>
<div class="t" id="t60_991" style="left:60px;top:981px;font-size:13px;color:#bbbbbb;letter-spacing:-0.1px;">Git</div>
<svg style="left:102px;top:984px;" width="14" height="12" viewBox="0 0 14 12"><path d="M0 1 H2 M4 1 H14 M0 5.5 H2 M4 5.5 H14 M0 10 H2 M4 10 H14" stroke="#afb1b3" stroke-width="2"/></svg>
<div class="t" id="t120_991" style="left:120px;top:981px;font-size:13px;color:#bbbbbb;letter-spacing:-0.1px;">TODO</div>
<svg style="left:184px;top:983px;" width="14" height="14" viewBox="0 0 14 14"><circle cx="7" cy="7" r="7" fill="#c75450"/><path d="M7 3 V8" stroke="#3c3f41" stroke-width="2"/><circle cx="7" cy="10.7" r="1.1" fill="#3c3f41"/></svg>
<div class="t" id="t203_991" style="left:203px;top:981px;font-size:13px;color:#bbbbbb;letter-spacing:-0.1px;">Problems</div>
<svg style="left:286px;top:983px;" width="14" height="14" viewBox="0 0 14 14"><rect x="0" y="0" width="14" height="14" fill="#afb1b3"/><path d="M3 3.5 L6.5 6.5 L3 9.5 M7 10.5 H11" stroke="#3c3f41" stroke-width="1.5" fill="none"/></svg>
<div class="t" id="t306_991" style="left:306px;top:981px;font-size:13px;color:#bbbbbb;letter-spacing:-0.1px;">Terminal</div>
<svg style="left:385px;top:983px;" width="14" height="15" viewBox="0 0 14 15"><rect x="0" y="0" width="14" height="15" fill="#6e7072"/><path d="M5 3 H3.5 V12 H5 M9 3 H10.5 V12 H9" stroke="#3c3f41" stroke-width="1.3" fill="none"/></svg>
<div class="t" id="t408_991" style="left:408px;top:981px;font-size:13px;color:#bbbbbb;letter-spacing:-0.1px;">Style Checker</div>
<svg style="left:515px;top:982px;" width="16" height="16" viewBox="0 0 16 16"><path d="M8 0.5 L15.5 4 L8 7.5 L0.5 4Z" fill="#afb1b3"/><path d="M0.5 8 L8 11.5 L15.5 8 M0.5 11.5 L8 15 L15.5 11.5" stroke="#afb1b3" stroke-width="1.6" fill="none"/></svg>
<div class="t" id="t536_991" style="left:536px;top:981px;font-size:13px;color:#bbbbbb;letter-spacing:-0.1px;">Python Packages</div>
<svg style="left:661px;top:982px;" width="16" height="16" viewBox="0 0 16 16"><path d="M4 0.5 H12 L15.5 8 L12 15.5 H4 L0.5 8Z" fill="#afb1b3"/><path d="M6 4.5 L11 8 L6 11.5Z" fill="#3c3f41"/></svg>
<div class="t" id="t683_991" style="left:683px;top:981px;font-size:13px;color:#bbbbbb;letter-spacing:-0.1px;">Services</div>
<div class="a" id="status"></div>
<svg style="left:7px;top:1011px;" width="16" height="15" viewBox="0 0 16 15"><rect x="3.5" y="0.5" width="11" height="11" fill="none" stroke="#afb1b3" stroke-width="1.2"/><path d="M0.8 3 V14.2 H12" stroke="#afb1b3" stroke-width="1.2" fill="none"/></svg>
<div class="t" id="t34_1018" style="left:34px;top:1008px;font-size:14.7px;color:#bbbbbb;letter-spacing:0.040px;">Cannot resolve symbol 'Main'</div>
<div class="t" id="t1594_1018" style="left:1594px;top:1008px;font-size:14.5px;color:#bbbbbb;letter-spacing:-0.272px;">244:20</div>
<div class="t" id="t1651_1018" style="left:1651px;top:1008px;font-size:14.5px;color:#bbbbbb;letter-spacing:-0.800px;">CRLF</div>
<div class="t" id="t1699_1018" style="left:1699px;top:1008px;font-size:14.5px;color:#bbbbbb;letter-spacing:-0.523px;">UTF-8</div>
<div class="t" id="t1753_1018" style="left:1753px;top:1008px;font-size:14.5px;color:#bbbbbb;letter-spacing:-0.292px;">4 spaces</div>
<svg style="left:1826px;top:1009px;" width="16" height="18" viewBox="0 0 16 18"><circle cx="2.5" cy="2.5" r="2" fill="#afb1b3"/><circle cx="2.5" cy="14.5" r="2" fill="#afb1b3"/><path d="M2.5 2 V15 M2.5 11 Q9 10 9 4" stroke="#afb1b3" stroke-width="2" fill="none"/><circle cx="9" cy="4" r="2" fill="#afb1b3"/><circle cx="11.5" cy="14" r="3.5" fill="#499c54"/></svg>
<div class="t" id="t1845_1018" style="left:1845px;top:1008px;font-size:14.5px;color:#bbbbbb;letter-spacing:0.521px;">main</div>
<svg style="left:1889px;top:1009px;" width="17" height="16" viewBox="0 0 17 16"><path d="M3 7 V4 A3 3 0 0 1 9 4" stroke="#afb1b3" stroke-width="1.6" fill="none"/><rect x="6" y="8" width="10" height="8" fill="#afb1b3"/></svg>
<div class="t" style="left:1857px;top:917px;width:100px;line-height:18px;font-size:13px;color:#bbbbbb;text-align:center;transform:rotate(90deg)">Notifications</div>
<svg style="left:1899px;top:869px;" width="16" height="16" viewBox="0 0 16 16"><path d="M2 12 Q3 10 3 7 Q3 2 8 2 Q13 2 13 7 Q13 10 14 12Z" fill="#afb1b3"/><rect x="6" y="13" width="4" height="2" fill="#afb1b3"/><circle cx="12.5" cy="3" r="3" fill="#c75450"/></svg>
<div class="a" id="taskbar"></div>
<svg style="left:20px;top:1046px;" width="20" height="19" viewBox="0 0 20 19"><path d="M0 2.6 L8.2 1.5 V9 H0Z M9 1.4 L20 0 V9 H9Z M0 10 H8.2 V17.5 L0 16.4Z M9 10 H20 V19 L9 17.6Z" fill="#ffffff"/></svg>
<div class="a" style="left:60px;top:1030px;width:430px;height:50px;background:#f2f2f2;border-top:1px solid #c9c9c9;border-bottom:1px solid #d6d6d6"></div>
<svg style="left:75px;top:1045px;" width="20" height="20" viewBox="0 0 20 20"><circle cx="12" cy="7.5" r="6" stroke="#1a1a1a" stroke-width="1.6" fill="none"/><path d="M7.5 12 L1 18.5" stroke="#1a1a1a" stroke-width="1.6"/></svg>
<div class="t" id="t110_1056" style="left:110px;top:1046px;font-size:19px;color:#1f1f1f;letter-spacing:-0.330px;">Type here to search</div>
<svg style="left:405px;top:1035px;" width="66" height="42" viewBox="0 0 66 42"><path d="M6 10 L8 5 L10 10 L15 12 L10 14 L8 19 L6 14 L1 12Z" fill="#f7c744" transform="translate(6,-3) scale(0.7)"/><path d="M4 34 Q12 12 26 16 Q34 20 38 34Z" fill="#6cc66c"/><rect x="31" y="13" width="26" height="22" rx="3" fill="#eaeaea" stroke="#c8c8c8"/><rect x="31" y="13" width="26" height="7" rx="2" fill="#3a7bd5"/><path d="M36 10 V16 M52 10 V16" stroke="#555" stroke-width="1.5"/><circle cx="55" cy="32" r="6.5" fill="#f07b2b"/><circle cx="55" cy="32" r="2.5" fill="#fff"/><path d="M50 35 L55 42 L60 35Z" fill="#f07b2b"/></svg>
<svg style="left:509px;top:1044px;" width="22" height="22" viewBox="0 0 22 22"><circle cx="11" cy="11" r="9" stroke="#fff" stroke-width="2.2" fill="none"/></svg>
<svg style="left:568px;top:1045px;" width="25" height="20" viewBox="0 0 25 20"><rect x="2" y="3" width="17" height="14" fill="none" stroke="#fff" stroke-width="1.6"/><path d="M0 1 H21 M0 19 H21 M23 2 V8 M23 12 V18" stroke="#fff" stroke-width="1.6"/></svg>
<svg style="left:628px;top:1040px;" width="30" height="30" viewBox="0 0 30 30"><path d="M9 7 Q9 1 15 1 Q21 1 21 7" stroke="#2b88d8" stroke-width="2" fill="none"/><rect x="1" y="6" width="28" height="24" rx="3" fill="#ffffff"/><rect x="10" y="13" width="4.5" height="4.5" fill="#f25022"/><rect x="15.5" y="13" width="4.5" height="4.5" fill="#7fba00"/><rect x="10" y="18.5" width="4.5" height="4.5" fill="#00a4ef"/><rect x="15.5" y="18.5" width="4.5" height="4.5" fill="#ffb900"/></svg>
<svg style="left:690px;top:1042px;" width="30" height="26" viewBox="0 0 30 26"><path d="M0 2 H11 L14 5 H30 V26 H0Z" fill="#e8a33a"/><rect x="0" y="8" width="30" height="18" fill="#f8d45c"/><rect x="7" y="15" width="16" height="8" fill="#2b88d8"/><rect x="10" y="15" width="10" height="4" fill="#f8d45c"/></svg>
<svg style="left:752px;top:1040px;" width="44" height="36" viewBox="0 0 44 36"><path d="M1 10 L17 0 L33 10 V28 H1Z" fill="#0f6cbd"/><path d="M1 10 L17 20 L33 10" fill="#28a8ea"/><rect x="17" y="16" width="27" height="19" rx="9.5" fill="#2d2d2d" stroke="#9a9a9a" stroke-width="1"/><text x="20.5" y="31" font-family="Liberation Sans" font-size="14" fill="#fff">99+</text></svg>
<div class="a" style="left:800px;top:1030px;width:61px;height:50px;background:#a3582b"></div>
<div class="a" style="left:800px;top:1077px;width:61px;height:3px;background:#f27a1a"></div>
<svg style="left:815px;top:1040px;" width="36" height="32" viewBox="0 0 36 32"><circle cx="14.5" cy="14.5" r="14" fill="#5865f2"/><path d="M7 10 Q10 7.5 12 8 L13 9.5 H16 L17 8 Q19 7.5 22 10 Q24 15 23 20 Q21 22 18.5 22 L17.5 20.5 H11.5 L10.5 22 Q8 22 6 20 Q5 15 7 10Z" fill="#fff"/><circle cx="11.5" cy="15.5" r="1.6" fill="#5865f2"/><circle cx="17.5" cy="15.5" r="1.6" fill="#5865f2"/><circle cx="26" cy="23" r="9" fill="#e8403d"/><text x="18.5" y="28" font-family="Liberation Sans" font-size="13" fill="#fff">9+</text></svg>
<svg style="left:875px;top:1040px;" width="30" height="30" viewBox="0 0 30 30"><path d="M3 6 L19 0 L27 3 V27 L19 30 L3 24 L19 26 V4 L9 8 V22 L3 24Z" fill="#e43e2b"/></svg>
<svg style="left:937px;top:1039px;" width="33" height="33" viewBox="0 0 33 33"><defs><linearGradient id="eg" x1="0" y1="0" x2="1" y2="1"><stop offset="0" stop-color="#33c481"/><stop offset="1" stop-color="#0c59a4"/></linearGradient></defs><circle cx="16.5" cy="16.5" r="16" fill="url(#eg)"/><path d="M8 18 Q9 10 18 10 Q25 11 25 17 H12 Q13 23 20 23 Q24 23 27 21 Q24 29 16 29 Q7 28 8 18Z" fill="#1c8fd6"/><path d="M12 17 Q13 13 18 13 Q22 13 22 17Z" fill="#2b2b2b" opacity="0.3"/></svg>
<svg style="left:1003px;top:1040px;" width="24" height="32" viewBox="0 0 24 32"><path d="M14 0 L4 14 L12 14 L6 32 L20 14 L12 14 L18 0Z" fill="#ffffff" stroke="#202020" stroke-width="1"/></svg>
<svg style="left:1062px;top:1040px;" width="36" height="34" viewBox="0 0 36 34"><circle cx="15" cy="15" r="14" fill="#db4437"/><path d="M15 15 L27.1 22 A14 14 0 0 1 3.9 23.5Z" fill="#0f9d58"/><path d="M15 15 L3.9 23.5 A14 14 0 0 1 2.9 8Z" fill="#0f9d58"/><path d="M15 15 L27.1 22 A14 14 0 0 0 29 15 A14 14 0 0 0 27 8Z" fill="#ffcd40"/><circle cx="15" cy="15" r="6.5" fill="#fff"/><circle cx="15" cy="15" r="5" fill="#4285f4"/><circle cx="27" cy="24" r="9" fill="#5a3d33" stroke="#202020"/><text x="22" y="29" font-family="Liberation Sans" font-size="12" fill="#ddd">M</text></svg>
<div class="a" style="left:1053px;top:1077px;width:51px;height:3px;background:#76b9ed"></div>
<div class="a" style="left:1110px;top:1030px;width:61px;height:50px;background:#3e3e3e"></div>
<div class="a" style="left:1110px;top:1077px;width:61px;height:3px;background:#76b9ed"></div>
<svg style="left:1125px;top:1040px;" width="31" height="31" viewBox="0 0 31 31"><defs><linearGradient id="ijg2" x1="0" y1="0" x2="1" y2="1"><stop offset="0" stop-color="#fe315d"/><stop offset="0.5" stop-color="#7b3ee0"/><stop offset="1" stop-color="#087cfa"/></linearGradient></defs><rect x="0" y="0" width="31" height="31" fill="url(#ijg2)"/><rect x="4" y="4" width="23" height="23" fill="#000"/><text x="7" y="16" font-family="Liberation Sans" font-weight="bold" font-size="10" fill="#fff">IJ</text><rect x="7" y="20" width="8" height="2" fill="#fff"/></svg>
<svg style="left:1446px;top:1041px;" width="32" height="30" viewBox="0 0 32 30"><circle cx="14" cy="14" r="13" fill="#1e90e8" stroke="#fff" stroke-width="2"/><text x="8" y="21" font-family="Liberation Sans" font-weight="bold" font-size="19" fill="#fff">?</text><circle cx="23" cy="22" r="6.5" fill="#e81123"/><rect x="22" y="17.5" width="2" height="5" fill="#fff"/><rect x="22" y="24" width="2" height="2" fill="#fff"/></svg>
<svg style="left:1585px;top:1044px;" width="23" height="23" viewBox="0 0 23 23"><defs><linearGradient id="sun" x1="0" y1="0" x2="0" y2="1"><stop offset="0" stop-color="#ffc107"/><stop offset="1" stop-color="#f57c00"/></linearGradient></defs><circle cx="11.5" cy="11.5" r="11" fill="url(#sun)"/></svg>
<div class="t" id="t1622_1056" style="left:1622px;top:1046px;font-size:18px;color:#ffffff;letter-spacing:-0.527px;">81°F&nbsp; Sunny</div>
<svg style="left:1741px;top:1049px;" width="18" height="10" viewBox="0 0 18 10"><path d="M1 9 L9 1 L17 9" stroke="#fff" stroke-width="1.6" fill="none"/></svg>
<div class="t" id="t1786_1043" style="left:1786px;top:1033px;font-size:14.5px;color:#ffffff;letter-spacing:-0.333px;">2:15 PM</div>
<div class="t" id="t1781_1066" style="left:1781px;top:1056px;font-size:15px;color:#ffffff;letter-spacing:0.373px;">7/6/2022</div>
<svg style="left:1868px;top:1044px;" width="30" height="30" viewBox="0 0 30 30"><path d="M1 1 H21 V17 H8 L4 21 V17 H1Z" fill="#fff"/><path d="M5 6 H17 M5 9 H17 M5 12 H13" stroke="#202020" stroke-width="1.3"/><circle cx="19" cy="20" r="8" fill="#202020" stroke="#bbb" stroke-width="1.3"/><text x="15.5" y="25" font-family="Liberation Sans" font-weight="bold" font-size="13" fill="#fff">1</text></svg>
<div class="a" style="left:1913px;top:1030px;width:1px;height:50px;background:#6a6a6a"></div>
</body></html>
